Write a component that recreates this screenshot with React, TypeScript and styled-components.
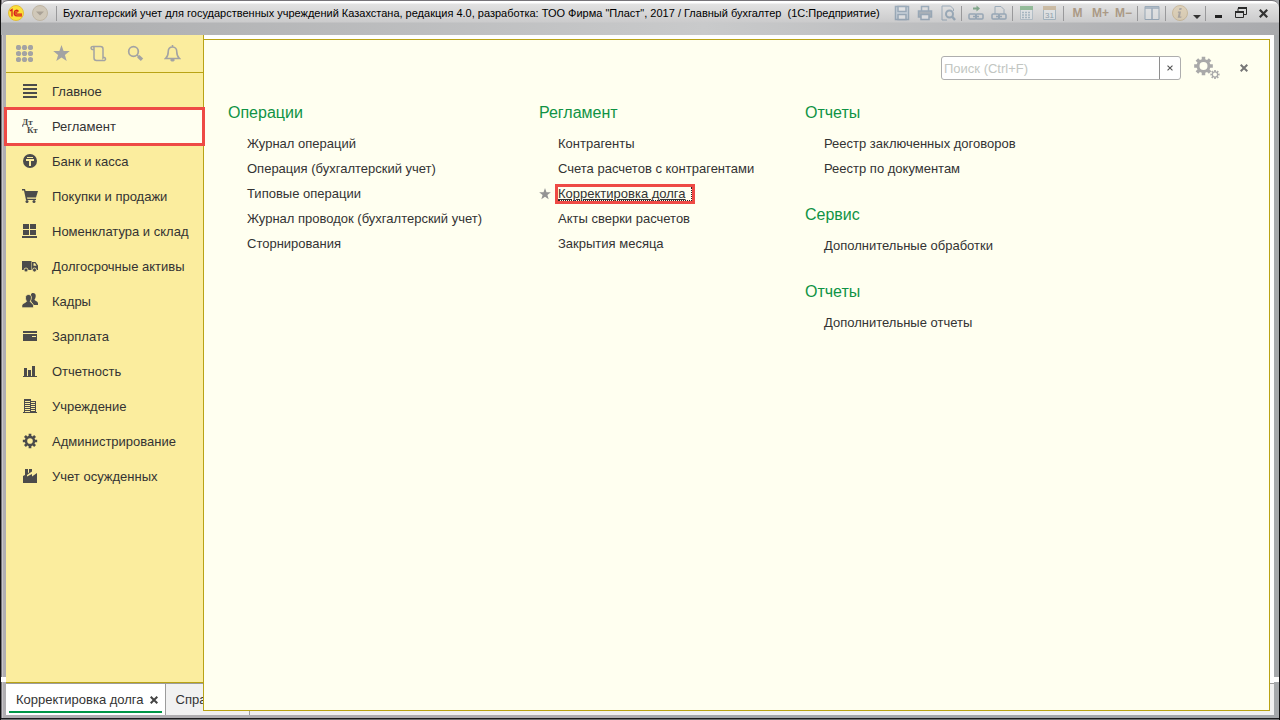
import React from 'react';
import styled, { createGlobalStyle, css } from 'styled-components';

const GOLD = '#b9a315';
const RED = '#ee4a45';

const GlobalStyle = createGlobalStyle`
  * { box-sizing: border-box; }
  body {
    margin: 0;
    background: #000;
    color: #333;
    font-family: "Liberation Sans", Arial, sans-serif;
    font-size: 13px;
  }
  button { padding: 0; border: 0; background: none; color: inherit; font: inherit; }
  svg { display: block; }
`;

const Frame = styled.div`
  display: flex;
  flex-direction: column;
  min-height: 100vh;
  border: solid #111;
  border-width: 0 1px;
  padding: 0 5px 5px;
  background:
    linear-gradient(to top, #6e6e70 0 1px, #1c1c1e 1px 2px, transparent 2px 38px, #fff 38px 43px, transparent 43px),
    linear-gradient(to right, #77757a 0 1px, #c9c6c9 1px 2px, #b0aeb1 2px 50%, #a5a8ab 50%);
`;

const TitleBar = styled.header`
  display: flex;
  align-items: flex-start;
  height: 35px;
  margin: 0 -5px;
  padding: 0 5px 0 6px;
  border-top: 1px solid #77757a;
  border-radius: 7px 7px 0 0;
  background:
    linear-gradient(to bottom, #fff 0 2px, #e2e2e2 3px, #cbcbcc 21px, transparent 22px),
    linear-gradient(to right, #abacae, #c9cacb 55%, #a9aaad);
`;

const TitleGroup = styled.div`
  display: flex;
  align-items: center;
  height: 24px;
`;

const Title = styled.h1`
  flex: 1;
  min-width: 0;
  margin: 0;
  padding-left: 4px;
  overflow: hidden;
  color: #000;
  font-size: 11px;
  font-weight: 400;
  line-height: 24px;
  white-space: nowrap;
`;

const TitleButton = styled.button<{ $w?: number; $dim?: boolean }>`
  display: flex;
  align-items: center;
  justify-content: center;
  width: ${(p) => p.$w ?? 23}px;
  height: 24px;
  opacity: ${(p) => (p.$dim ? 0.5 : 1)};
`;

const MemoryButton = styled(TitleButton)`
  color: #ab9a86;
  font-size: 12px;
  font-weight: 700;
`;

const Separator = styled.span`
  flex: none;
  width: 1px;
  height: 15px;
  margin: 0 2px;
  background: #99999b;
`;

const Workspace = styled.div`
  display: grid;
  flex: 1;
  grid-template-rows: 1fr auto;
  grid-template-columns: 198px minmax(0, 1fr);
  background: #fff;
`;

const Sidebar = styled.nav`
  grid-row: 1;
  grid-column: 1;
  border: solid ${GOLD};
  border-width: 0 1px 1px 0;
  background: #fbed9e;
`;

const QuickTools = styled.div`
  display: flex;
  height: 38px;
  border-bottom: 1px solid ${GOLD};
`;

const QuickButton = styled.button`
  display: flex;
  align-items: center;
  justify-content: center;
  width: 37px;
  color: #a3a3a3;
`;

const SectionList = styled.ul`
  margin: 0;
  padding: 1px 0 0;
  list-style: none;
`;

const SectionLink = styled.a<{ $active?: boolean }>`
  display: flex;
  align-items: center;
  gap: 14px;
  height: 35px;
  padding-left: 16px;
  color: #333;
  text-decoration: none;
  white-space: nowrap;
  ${(p) =>
    p.$active &&
    css`
      position: relative;
      z-index: 2;
      background: #fffff0;
      outline: 3px solid ${RED};
      outline-offset: -1px;
    `}
`;

const Panel = styled.main`
  z-index: 1;
  grid-row: 1 / 3;
  grid-column: 2;
  margin: 4px 4px 4px -1px;
  border: 1px solid ${GOLD};
  background: #fffff0;
`;

const PanelBar = styled.div`
  display: flex;
  align-items: center;
  justify-content: flex-end;
  height: 56px;
  padding-right: 21px;
`;

const SearchBox = styled.div`
  display: flex;
  width: 240px;
  height: 24px;
  border: 1px solid #aeaeae;
  border-radius: 3px;
  background: #fff;
`;

const SearchInput = styled.input`
  flex: 1;
  min-width: 0;
  padding: 0 2px;
  border: 0;
  outline: 0;
  background: transparent;
  font: inherit;
  &::placeholder { color: #c2c6c2; opacity: 1; }
`;

const ClearButton = styled.button`
  display: flex;
  align-items: center;
  justify-content: center;
  width: 21px;
  border-left: 1px solid #8e8e8e;
  color: #555;
`;

const PanelButton = styled.button<{ $ml: number }>`
  margin-left: ${(p) => p.$ml}px;
  color: #a9a9a9;
`;

const Columns = styled.div`
  display: grid;
  grid-template-columns: 266px 221px auto;
  justify-content: start;
  gap: 45px;
  padding: 7px 24px 24px;
`;

const Column = styled.div`
  display: flex;
  flex-direction: column;
  gap: 24px;
`;

const GroupTitle = styled.h2`
  margin: 0 0 8px;
  color: #109345;
  font-size: 16px;
  font-weight: 400;
  line-height: 20px;
`;

const CommandList = styled.ul`
  margin: 0;
  padding: 0;
  list-style: none;
`;

const Command = styled.li`
  display: grid;
  grid-template-columns: 19px auto;
  align-items: center;
  justify-content: start;
  height: 25px;
  white-space: nowrap;
`;

const CommandLink = styled.a<{ $marked?: boolean }>`
  grid-column: 2;
  color: #333;
  line-height: 15px;
  text-decoration: none;
  ${(p) =>
    p.$marked &&
    css`
      min-width: 134px;
      height: 14px;
      border: dotted #222;
      border-width: 0 1px 1px 0;
      outline: 3px solid ${RED};
      line-height: 14px;
      text-decoration: underline;
    `}
`;

const TabStrip = styled.div`
  display: flex;
  grid-row: 2;
  grid-column: 1 / 3;
  height: 32px;
  border-top: 1px solid #9c9c9c;
  background: #f1f1f1;
`;

const Tab = styled.div<{ $active?: boolean }>`
  display: flex;
  align-items: center;
  gap: 6px;
  min-width: 84px;
  padding: 0 7px 0 10px;
  border-right: 1px solid #9c9c9c;
  background: ${(p) =>
    p.$active ? 'linear-gradient(#009646, #009646) 3px 27px / calc(100% - 6px) 2px no-repeat, #fff' : '#f1f1f1'};
`;

const TabButton = styled.button`
  height: 31px;
  color: #333;
`;

const TabClose = styled.button`
  color: #444;
`;

const Cross = ({ size = 8, width = 2 }: { size?: number; width?: number }) => (
  <svg width={size} height={size} viewBox="0 0 8 8" fill="none" stroke="currentColor" strokeWidth={width}>
    <path d="M.7.7l6.6 6.6M7.3.7L.7 7.3" />
  </svg>
);

const gearPath = (cx: number, cy: number, r: number, teeth: number, depth: number, hole: number) => {
  const pts: string[] = [];
  const step = (Math.PI * 2) / teeth;
  for (let i = 0; i < teeth; i++) {
    const a = i * step - Math.PI / 2;
    [
      [-0.32, r - depth],
      [-0.24, r],
      [0.24, r],
      [0.32, r - depth],
    ].forEach(([f, rad]) => {
      pts.push(`${(cx + Math.cos(a + f * step) * rad).toFixed(2)} ${(cy + Math.sin(a + f * step) * rad).toFixed(2)}`);
    });
  }
  return `M${pts.join('L')}ZM${cx - hole} ${cy}a${hole} ${hole} 0 1 0 ${hole * 2} 0a${hole} ${hole} 0 1 0 ${-hole * 2} 0Z`;
};

const STAR = 'M8.5 0l2.1 5.9 6.2.1-4.9 3.9 1.8 6.1-5.2-3.6L3.3 16l1.8-6.1L.2 6l6.2-.1z';

const Icon = ({ children }: { children: React.ReactNode }) => (
  <svg width="16" height="17" viewBox="0 0 16 17" fill="#4b4b4b">
    {children}
  </svg>
);

const sections: { label: string; active?: boolean; icon: React.ReactNode }[] = [
  { label: 'Главное', icon: <path d="M1 1h14v2H1zM1 5h14v2H1zM1 9h14v2H1zM1 13h14v2H1z" /> },
  {
    label: 'Регламент',
    active: true,
    icon: (
      <g fontFamily="Liberation Serif, serif" fontSize="9" fontWeight="700">
        <text x="0" y="7">Дт</text>
        <text x="5" y="15">Кт</text>
      </g>
    ),
  },
  {
    label: 'Банк и касса',
    icon: (
      <>
        <circle cx="8" cy="8" r="7" />
        <path d="M5 4h6v1H5zM4 6h8v2H9v5H7V8H4z" fill="#fbed9e" />
      </>
    ),
  },
  {
    label: 'Покупки и продажи',
    icon: (
      <>
        <path d="M0 1h3l.6 2H16l-2 6.5H5l.3 1.2H14V12H4L2 2.500H0z" />
        <circle cx="5" cy="13.600" r="1.500" />
        <circle cx="12" cy="13.600" r="1.500" />
      </>
    ),
  },
  {
    label: 'Номенклатура и склад',
    icon: <path d="M1 1h6v5H1zM8 1h6v5H8zM1 7h6v5H1zM8 7h6v5H8zM0 13h15v2H0z" />,
  },
  {
    label: 'Долгосрочные активы',
    icon: (
      <>
        <path fillRule="evenodd" d="M0 3h9.500v9H0zM10 4h3.500L16 7.500V12h-6zM11.500 5.300v2.400h3L13 5.300z" />
        <circle cx="4" cy="12" r="2" stroke="#fbed9e" strokeWidth=".8" />
        <circle cx="12.500" cy="12" r="2" stroke="#fbed9e" strokeWidth=".8" />
      </>
    ),
  },
  {
    label: 'Кадры',
    icon: (
      <>
        <path d="M11 0c2 0 3 1.400 2.700 3.500-.2 1.600-.8 2.500-1.200 3 .2 1.500 3.500 1.500 3.500 4V12h-4.500L9 8V1.300C9.500.4 10 0 11 0z" />
        <path
          stroke="#fbed9e"
          strokeWidth=".8"
          d="M6.500 1.500c2.200 0 3.200 1.500 2.900 3.700-.2 1.700-.8 2.400-1.200 3 .2 1.800 3.300 1.800 3.300 4.500v2.100H-.2v-2.100c0-2.700 4-2.700 4.800-4.500-.5-.6-1-1.500-1.100-3-.2-2.200.8-3.700 3-3.700z"
        />
      </>
    ),
  },
  { label: 'Зарплата', icon: <path fillRule="evenodd" d="M1 3h14v2H1zM1 6h14v7H1zM10 8v1h4V8z" /> },
  { label: 'Отчетность', icon: <path d="M2 5h3v8h1V7h3v6h1V3h3v10h2v1H1v-1h1z" /> },
  {
    label: 'Учреждение',
    icon: (
      <path
        fillRule="evenodd"
        d="M2 1h7v2h5v11h1v1H1v-1h1zM3 3v1h5V3zM3 5v1h5V5zM3 7v1h5V7zM3 9v1h5V9zM3 11v1h5v-1zM3 13v1h5v-1zM9 4v1h4V4zM9 6v1h4V6zM9 8v1h4V8zM9 10v1h4v-1zM9 12v1h4v-1z"
      />
    ),
  },
  { label: 'Администрирование', icon: <path fillRule="evenodd" d={gearPath(8, 8, 7.3, 8, 2, 2.8)} /> },
  { label: 'Учет осужденных', icon: <path d="M1 15V8l2-1V1h3v4l1-.5V1h3v2.500L7 5.500 5 7v1.500l5-2.500v2.500L15 5v10z" /> },
];

const quickTools: { label: string; icon: React.ReactNode }[] = [
  {
    label: 'Разделы',
    icon: (
      <svg width="17" height="17" viewBox="0 0 17 17" fill="currentColor">
        {[2.5, 8.5, 14.5].map((y) => [2.5, 8.5, 14.5].map((x) => <circle key={`${x}-${y}`} cx={x} cy={y} r="2.6" />))}
      </svg>
    ),
  },
  {
    label: 'Избранное',
    icon: (
      <svg width="17" height="17" viewBox="0 0 17 17" fill="currentColor">
        <path d={STAR} />
      </svg>
    ),
  },
  {
    label: 'История',
    icon: (
      <svg width="17" height="17" viewBox="0 0 17 17" fill="none" stroke="currentColor" strokeWidth="1.500">
        <path d="M4 4.500H2.300A1.500 1.500 0 1 1 4 2.500V13q0 2.500 2.500 2.500H14.500a1.500 1.500 0 1 0-1.500-2.500V4q0-2.500-2.500-2.500H2.500" />
      </svg>
    ),
  },
  {
    label: 'Поиск',
    icon: (
      <svg width="17" height="17" viewBox="0 0 17 17" fill="none" stroke="currentColor">
        <circle cx="6.500" cy="6.500" r="4.800" strokeWidth="1.700" />
        <path d="M9.800 9.800l2 2" strokeWidth="1.500" />
        <path d="M11.300 11.300l3.700 3.500" strokeWidth="3.400" />
      </svg>
    ),
  },
  {
    label: 'Уведомления',
    icon: (
      <svg width="17" height="17" viewBox="0 0 17 17" fill="none" stroke="currentColor" strokeWidth="1.600">
        <path d="M8.500 0v2M8.500 2C5.500 2 4.200 4 4.200 7c0 3.300-.7 4.800-2.700 6.500h14c-2-1.700-2.700-3.200-2.700-6.500 0-3-1.300-5-4.300-5z" />
        <path d="M6.500 14h4v1.500l-1 1h-2l-1-1z" fill="currentColor" stroke="none" />
      </svg>
    ),
  },
];

type Item = { label: string; marked?: boolean };
const columns: { title: string; items: Item[] }[][] = [
  [
    {
      title: 'Операции',
      items: [
        { label: 'Журнал операций' },
        { label: 'Операция (бухгалтерский учет)' },
        { label: 'Типовые операции' },
        { label: 'Журнал проводок (бухгалтерский учет)' },
        { label: 'Сторнирования' },
      ],
    },
  ],
  [
    {
      title: 'Регламент',
      items: [
        { label: 'Контрагенты' },
        { label: 'Счета расчетов с контрагентами' },
        { label: 'Корректировка долга', marked: true },
        { label: 'Акты сверки расчетов' },
        { label: 'Закрытия месяца' },
      ],
    },
  ],
  [
    { title: 'Отчеты', items: [{ label: 'Реестр заключенных договоров' }, { label: 'Реестр по документам' }] },
    { title: 'Сервис', items: [{ label: 'Дополнительные обработки' }] },
    { title: 'Отчеты', items: [{ label: 'Дополнительные отчеты' }] },
  ],
];

const ToolSvg = ({ children }: { children: React.ReactNode }) => (
  <svg width="16" height="16" viewBox="0 0 16 16" fill="none" stroke="#5b7a96" strokeWidth="1.500">
    {children}
  </svg>
);

export default function App() {
  return (
    <>
      <GlobalStyle />
      <Frame>
        <TitleBar>
          <TitleGroup>
            <TitleButton $w={18} aria-label="1С:Предприятие">
              <svg width="16" height="16" viewBox="0 0 16 16">
                <circle cx="8" cy="8" r="7.500" fill="#fce138" stroke="#e3bd3a" />
                <path
                  d="M2 6l2-1.500v7M10.500 6.500C9.500 4.500 6.200 5 6.200 8c0 2 1.300 2.800 2.500 2.800H14M9.600 7.300c-1-.8-1.800-.3-1.800.7s.6 1.200 1.400 1.200H14"
                  fill="none"
                  stroke="#d8201b"
                  strokeWidth="1.300"
                />
              </svg>
            </TitleButton>
            <TitleButton $w={29} aria-label="Главное меню">
              <svg width="16" height="16" viewBox="0 0 16 16">
                <circle cx="8" cy="8" r="7.500" fill="#d0c8b9" stroke="#bfb5a3" />
                <path d="M4 6.500h8l-4 4z" fill="#a9a196" />
              </svg>
            </TitleButton>
            <Separator />
          </TitleGroup>
          <Title>
            Бухгалтерский учет для государственных учреждений Казахстана, редакция 4.0, разработка: ТОО Фирма "Пласт", 2017 /
            Главный бухгалтер&nbsp; (1С:Предприятие)
          </Title>
          <TitleGroup>
            <TitleButton $dim aria-label="Сохранить">
              <ToolSvg>
                <path d="M1.500 1.500h13v13h-13z" fill="#b9cbdd" />
                <path d="M4 1.500h8v5H4zM4 9.500h8v5H4z" fill="#e7e9eb" />
              </ToolSvg>
            </TitleButton>
            <TitleButton $dim aria-label="Печать">
              <ToolSvg>
                <path d="M4.500 6V1.500h7V6" />
                <path d="M1.500 6h13v6h-13z" fill="#7d8b99" />
                <path d="M4 9.500h8v5H4z" fill="#e7e9eb" />
              </ToolSvg>
            </TitleButton>
            <TitleButton $dim aria-label="Просмотр">
              <ToolSvg>
                <path d="M13.500 6V4l-3-3H2v14h5" strokeWidth="1" />
                <circle cx="9.500" cy="9" r="3.500" strokeWidth="2" />
                <path d="M12 11.500l3 3.500" strokeWidth="2.500" />
              </ToolSvg>
            </TitleButton>
            <Separator />
            <TitleButton $dim aria-label="Получить ссылку">
              <ToolSvg>
                <path d="M5 3.500h5" stroke="#26713a" strokeWidth="2" />
                <path d="M8.500.5l3.500 3-3.500 3z" fill="#26713a" stroke="none" />
                <rect x="1" y="9" width="7" height="5" rx="1" />
                <rect x="8" y="9" width="7" height="5" rx="1" />
                <path d="M5 11.500h6" />
              </ToolSvg>
            </TitleButton>
            <TitleButton $dim aria-label="Перейти по ссылке">
              <ToolSvg>
                <path d="M4 9V1.500h6l3 3V9" strokeWidth="1" />
                <rect x="1" y="9" width="7" height="5" rx="1" />
                <rect x="8" y="9" width="7" height="5" rx="1" />
                <path d="M5 11.500h6" />
              </ToolSvg>
            </TitleButton>
            <Separator />
            <TitleButton $dim aria-label="Калькулятор">
              <ToolSvg>
                <path d="M1.500 1.500h12v13h-12z" fill="#e4e9ec" stroke="#91a8b8" strokeWidth="1" />
                <path d="M1 1h13v4H1z" fill="#4b9a56" stroke="none" />
                <path d="M3 7.500h9M3 10h9M3 12.500h9" stroke="#7695aa" strokeDasharray="2 1" />
              </ToolSvg>
            </TitleButton>
            <TitleButton $dim aria-label="Календарь">
              <ToolSvg>
                <path d="M1.500 1.500h12v13h-12z" fill="#e4e9ec" stroke="#7695aa" strokeWidth="1" />
                <path d="M1 1h13v4H1z" fill="#ba9b6b" stroke="none" />
                <text x="3" y="13" fill="#4b6a80" stroke="none" fontSize="8">31</text>
              </ToolSvg>
            </TitleButton>
            <Separator />
            <MemoryButton>M</MemoryButton>
            <MemoryButton>M+</MemoryButton>
            <MemoryButton>M−</MemoryButton>
            <Separator />
            <TitleButton $dim aria-label="Разделить окно">
              <ToolSvg>
                <path d="M1 1.500h14v13H1z" fill="#e4e6e8" strokeWidth="1" />
                <path d="M1 3h14M8 3v11" />
              </ToolSvg>
            </TitleButton>
            <Separator />
            <TitleButton $dim aria-label="О программе">
              <svg width="16" height="16" viewBox="0 0 16 16">
                <circle cx="8" cy="8" r="7.500" fill="#ddc596" stroke="#b99a63" />
                <path d="M7.500 3h2.300l-.5 2H7zM6 6.500h3l-1 5h1.500l-.3 1.200H5.700l1-5H5.800z" fill="#7e746c" />
              </svg>
            </TitleButton>
            <TitleButton $w={12} aria-label="Еще">
              <svg width="8" height="16" viewBox="0 0 8 16">
                <path d="M0 10h8l-4 4z" fill="#333" />
              </svg>
            </TitleButton>
            <Separator />
            <TitleButton $w={22} aria-label="Свернуть">
              <svg width="8" height="16" viewBox="0 0 8 16">
                <path d="M0 10h7v3H0z" fill="#222" />
              </svg>
            </TitleButton>
            <TitleButton $w={22} aria-label="Восстановить">
              <svg width="12" height="12" viewBox="0 0 12 12" fill="none" stroke="#2a2a2a">
                <path d="M3 4V1.500h8.500v6H9" />
                <path d="M3 1h9" strokeWidth="2" />
                <path d="M.5 4.500h8v6h-8z" />
                <path d="M0 5h9" strokeWidth="2" />
              </svg>
            </TitleButton>
            <TitleButton $w={22} aria-label="Закрыть">
              <Cross size={9} width={2} />
            </TitleButton>
          </TitleGroup>
        </TitleBar>

        <Workspace>
          <Sidebar>
            <QuickTools>
              {quickTools.map((t) => (
                <QuickButton key={t.label} aria-label={t.label}>
                  {t.icon}
                </QuickButton>
              ))}
            </QuickTools>
            <SectionList>
              {sections.map((s) => (
                <li key={s.label}>
                  <SectionLink href="#" $active={s.active}>
                    <Icon>{s.icon}</Icon>
                    {s.label}
                  </SectionLink>
                </li>
              ))}
            </SectionList>
          </Sidebar>

          <TabStrip>
            <Tab $active>
              <TabButton>Корректировка долга</TabButton>
              <TabClose aria-label="Закрыть вкладку">
                <Cross />
              </TabClose>
            </Tab>
            <Tab>
              <TabButton>Справка</TabButton>
            </Tab>
          </TabStrip>

          <Panel>
            <PanelBar>
              <SearchBox>
                <SearchInput type="text" aria-label="Поиск" placeholder="Поиск (Ctrl+F)" />
                <ClearButton aria-label="Очистить">
                  <Cross size={6} width={1.5} />
                </ClearButton>
              </SearchBox>
              <PanelButton $ml={13} aria-label="Настройки">
                <svg width="26" height="24" viewBox="0 0 26 24" fill="currentColor">
                  <path fillRule="evenodd" d={gearPath(9.5, 10, 9.5, 8, 2.5, 4)} />
                  <path fillRule="evenodd" d={gearPath(21, 18.5, 4.7, 8, 1.4, 2)} />
                </svg>
              </PanelButton>
              <PanelButton $ml={20} aria-label="Закрыть панель">
                <svg width="8" height="8" viewBox="0 0 8 8" fill="none" stroke="#777" strokeWidth="2">
                  <path d="M.7.7l6.600 6.600M7.300.7L.7 7.300" />
                </svg>
              </PanelButton>
            </PanelBar>
            <Columns>
              {columns.map((groups, i) => (
                <Column key={i}>
                  {groups.map((g, j) => (
                    <section key={j}>
                      <GroupTitle>{g.title}</GroupTitle>
                      <CommandList>
                        {g.items.map((it) => (
                          <Command key={it.label}>
                            {it.marked && (
                              <svg width="12" height="12" viewBox="0 0 17 17" fill="#949494">
                                <path d={STAR} />
                              </svg>
                            )}
                            <CommandLink href="#" $marked={it.marked}>
                              {it.label}
                            </CommandLink>
                          </Command>
                        ))}
                      </CommandList>
                    </section>
                  ))}
                </Column>
              ))}
            </Columns>
          </Panel>
        </Workspace>
      </Frame>
    </>
  );
}
